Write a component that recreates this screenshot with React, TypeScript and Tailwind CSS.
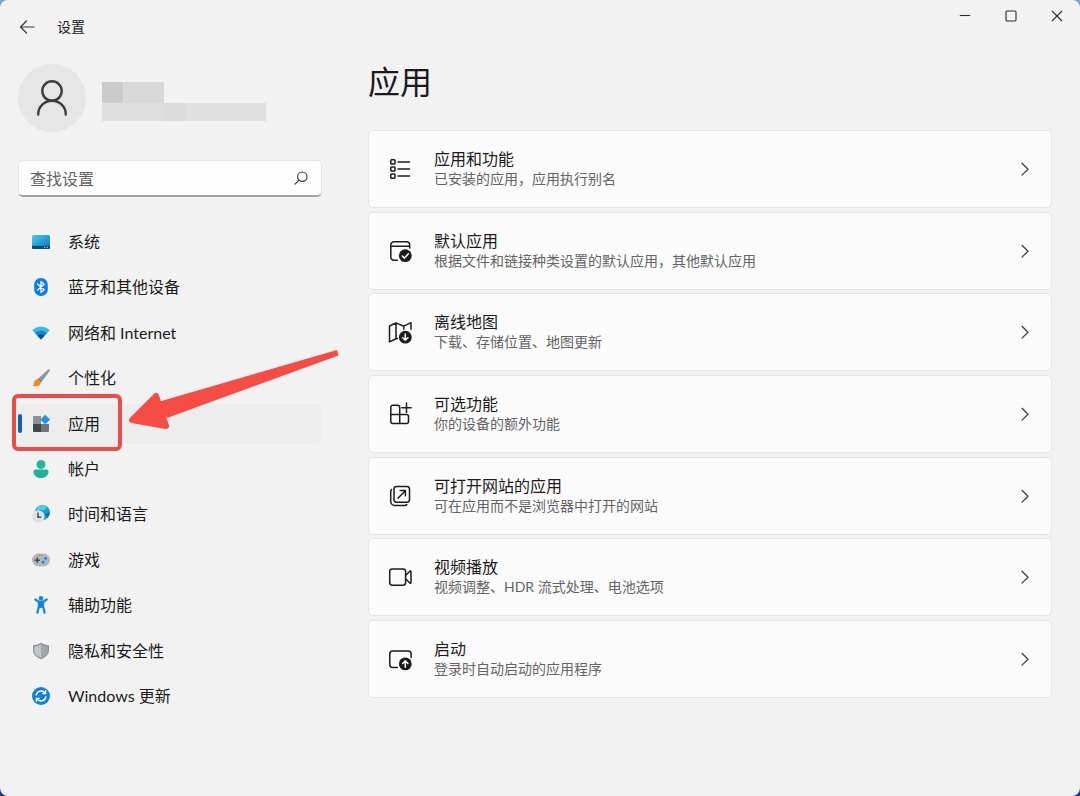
import React from "react";

type IconProps = { className?: string };

const navItems = [
    { id: "system", label: "系统", icon: SystemIcon },
    { id: "bluetooth", label: "蓝牙和其他设备", icon: BluetoothIcon },
    { id: "network", label: "网络和 Internet", icon: NetworkIcon },
    { id: "personalization", label: "个性化", icon: BrushIcon },
    { id: "apps", label: "应用", icon: AppsIcon },
    { id: "accounts", label: "帐户", icon: AccountIcon },
    { id: "time", label: "时间和语言", icon: TimeIcon },
    { id: "gaming", label: "游戏", icon: GamingIcon },
    { id: "accessibility", label: "辅助功能", icon: AccessibilityIcon },
    { id: "privacy", label: "隐私和安全性", icon: ShieldIcon },
    { id: "update", label: "Windows 更新", icon: UpdateIcon },
];

const cards = [
    { id: "features", title: "应用和功能", description: "已安装的应用，应用执行别名", icon: ListIcon },
    { id: "defaults", title: "默认应用", description: "根据文件和链接种类设置的默认应用，其他默认应用", icon: DefaultAppsIcon },
    { id: "maps", title: "离线地图", description: "下载、存储位置、地图更新", icon: MapIcon },
    { id: "optional", title: "可选功能", description: "你的设备的额外功能", icon: OptionalIcon },
    { id: "websites", title: "可打开网站的应用", description: "可在应用而不是浏览器中打开的网站", icon: OpenIcon },
    { id: "video", title: "视频播放", description: "视频调整、HDR 流式处理、电池选项", icon: VideoIcon },
    { id: "startup", title: "启动", description: "登录时自动启动的应用程序", icon: StartupIcon },
];

/* Sidebar icons, 18px */

function SystemIcon({ className }: IconProps) {
    return (
        <svg viewBox="0 0 18 18" className={className} aria-hidden="true">
            <defs>
                <linearGradient id="sys" x1="0" y1="0" x2="1" y2="1">
                    <stop offset="0" stopColor="#3fd0ee" />
                    <stop offset="1" stopColor="#1173b8" />
                </linearGradient>
            </defs>
            <rect y="2" width="18" height="14" rx="1.5" fill="url(#sys)" />
            <path d="M0 12.8h18v1.7a1.5 1.5 0 0 1-1.5 1.5h-15A1.5 1.5 0 0 1 0 14.5z" fill="#0c4a78" />
            <path d="M12 14.3h1.2M14.5 14.3H16" stroke="#b8e4f7" strokeWidth="0.9" />
        </svg>
    );
}

function BluetoothIcon({ className }: IconProps) {
    return (
        <svg viewBox="0 0 18 18" className={className} aria-hidden="true">
            <rect x="2.2" width="13.6" height="18" rx="6.5" fill="#0a7cf0" />
            <path d="M5.6 6l6.6 5.8L9 14.5v-11l3.2 2.7L5.6 12" fill="none" stroke="#fff" strokeWidth="1.3" strokeLinejoin="round" strokeLinecap="round" />
        </svg>
    );
}

function NetworkIcon({ className }: IconProps) {
    return (
        <svg viewBox="0 0 18 18" className={className} aria-hidden="true">
            <path d="M9 15.5L.3 6.2C5 1.7 13 1.7 17.7 6.2z" fill="#35b8ee" />
            <path d="M9 15.5L3 9.1c3.3-3.1 8.7-3.1 12 0z" fill="#1683d0" />
            <path d="M9 15.5l-3.4-3.6c1.9-1.8 4.9-1.8 6.8 0z" fill="#0d4f9c" />
        </svg>
    );
}

function BrushIcon({ className }: IconProps) {
    return (
        <svg viewBox="0 0 18 18" className={className} aria-hidden="true">
            <path d="M17.3.5c.6.5.4 1.3 0 1.9L10 12.3 6.600 9.2 15.500.9c.6-.5 1.3-.8 1.800-.4z" fill="#8d97a3" />
            <path d="M6.6 9.2l3.4 3.1-1.2 1.2-3.3-3.1z" fill="#5c6670" />
            <path d="M5.4 10.2c1.9.1 3.5 1.7 3.4 3.5-.2 3.3-4.8 4.5-8.6 3 2.3-.8 1.5-2.3 2.2-4.3.5-1.4 1.7-2.2 3-2.2z" fill="#f28a1c" />
        </svg>
    );
}

function AppsIcon({ className }: IconProps) {
    return (
        <svg viewBox="0 0 18 18" className={className} aria-hidden="true">
            <path d="M2 1h7v8H1V2a1 1 0 0 1 1-1z" fill="#8c9094" />
            <path d="M1 9h8v8H2a1 1 0 0 1-1-1z" fill="#43474b" />
            <path d="M9 9h8v7a1 1 0 0 1-1 1H9z" fill="#707478" />
            <rect x="9.8" y="1.2" width="6.8" height="6.8" rx="0.8" fill="#1b95e8" transform="rotate(45 13.2 4.6)" />
        </svg>
    );
}

function AccountIcon({ className }: IconProps) {
    return (
        <svg viewBox="0 0 18 18" className={className} aria-hidden="true">
            <circle cx="9" cy="4.5" r="4.5" fill="#25b79a" />
            <path d="M3.6 9.6h10.800c1.200 0 2.100.9 2.100 2.100 0 3.700-3.300 6.300-7.500 6.300s-7.500-2.600-7.500-6.300c0-1.200.9-2.100 2.100-2.100z" fill="#1fb095" />
        </svg>
    );
}

function TimeIcon({ className }: IconProps) {
    return (
        <svg viewBox="0 0 18 18" className={className} aria-hidden="true">
            <circle cx="10.5" cy="7.5" r="7.5" fill="#1a9fd4" />
            <path d="M8 .5c3-.6 5 0 7 1.7-1.6.6-1 2.6-3 3.1-2 .2-3-1.3-5-.3-1 .5-2 0-2.500-.5C5.200 2.500 6.500 1 8 .5z" fill="#4ccfe8" />
            <path d="M13 9l4.500-2c.3 2-.5 4.300-2.300 6z" fill="#0d6fb5" />
            <circle cx="6.3" cy="11.500" r="6.2" fill="#dfe2e5" />
            <path d="M6 7.500v4.700h3.200" fill="none" stroke="#4a4f54" strokeWidth="1.5" />
        </svg>
    );
}

function GamingIcon({ className }: IconProps) {
    return (
        <svg viewBox="0 0 18 18" className={className} aria-hidden="true">
            <rect y="2.500" width="18" height="13" rx="6.5" fill="#b3b7bc" />
            <path d="M5.300 6.500v5.400M2.600 9.200H8" stroke="#45494e" strokeWidth="1.4" />
            <circle cx="13.6" cy="7.4" r="1.4" fill="#1d7fd6" />
            <circle cx="11.2" cy="11.2" r="1.4" fill="#1d7fd6" />
            <path d="M6.500 4.500h1.200M9.200 4.500h1.200" stroke="#6d7277" strokeWidth="0.9" />
        </svg>
    );
}

function AccessibilityIcon({ className }: IconProps) {
    return (
        <svg viewBox="0 0 18 18" className={className} aria-hidden="true">
            <circle cx="9" cy="2.300" r="2.3" fill="#1487d8" />
            <path d="M3.300 3.500l3.200 2.200h5l3.200-2.200M6.700 6.500L7 10l-1.600 6.700M11.300 6.500L11 10l1.600 6.700" fill="none" stroke="#1487d8" strokeWidth="2.2" strokeLinecap="round" strokeLinejoin="round" />
            <path d="M6 5.500h6l-.6 6.500H6.600z" fill="#1487d8" />
        </svg>
    );
}

function ShieldIcon({ className }: IconProps) {
    return (
        <svg viewBox="0 0 18 18" className={className} aria-hidden="true">
            <path d="M9 .8c2.500 1.600 5 2.400 8 2.500v4.800c0 4.300-3.100 7.300-8 9.200C4.100 15.400 1 12.400 1 8.100V3.300c3-.1 5.500-.9 8-2.500z" fill="#8b8f94" />
            <path d="M9 2.200v13.700c-4.200-1.700-6.800-4.100-6.800-7.800V4.400C4.700 4.200 6.900 3.500 9 2.200z" fill="#c3c6c9" />
            <path d="M9 2.200c2.100 1.300 4.300 2 6.800 2.200v3.700c0 3.700-2.600 6.100-6.800 7.800z" fill="#a4a8ac" />
        </svg>
    );
}

function UpdateIcon({ className }: IconProps) {
    return (
        <svg viewBox="0 0 18 18" className={className} aria-hidden="true">
            <circle cx="9" cy="9" r="9" fill="#0f82d6" />
            <path d="M4.200 8a5 5 0 0 1 8.900-1.900M13.800 10a5 5 0 0 1-8.900 1.900" fill="none" stroke="#fff" strokeWidth="1.4" strokeLinecap="round" />
            <path d="M13.600 3.700v2.900h-2.900M4.400 14.300v-2.900h2.900" fill="none" stroke="#fff" strokeWidth="1.4" strokeLinecap="round" strokeLinejoin="round" />
        </svg>
    );
}

/* Card icons, 24px outline */

function Outline({ className, children }: IconProps & { children: React.ReactNode }) {
    return (
        <svg
            viewBox="0 0 24 24"
            className={className}
            fill="none"
            stroke="#1c1c1c"
            strokeWidth="1.5"
            strokeLinecap="round"
            strokeLinejoin="round"
            aria-hidden="true"
        >
            {children}
        </svg>
    );
}

function ListIcon({ className }: IconProps) {
    return (
        <Outline className={className}>
            <rect x="2.8" y="2.8" width="4.2" height="4.2" rx="0.8" />
            <rect x="2.8" y="9.9" width="4.2" height="4.2" rx="0.8" />
            <rect x="2.8" y="17" width="4.2" height="4.2" rx="0.8" />
            <path d="M10 4.900h11.500M10 12h11.500M10 19.100h11.500" />
        </Outline>
    );
}

function DefaultAppsIcon({ className }: IconProps) {
    return (
        <Outline className={className}>
            <path d="M9.300 21.300H6a3.200 3.200 0 0 1-3.200-3.200V6A3.200 3.200 0 0 1 6 2.800h12.500A3.200 3.200 0 0 1 21.700 6v3M2.800 7.300h18.900" />
            <circle cx="17.3" cy="16.7" r="6.4" fill="#1c1c1c" stroke="none" />
            <path d="M14.300 17l2.100 2.100 4-4.300" stroke="#fbfbfb" />
        </Outline>
    );
}

function MapIcon({ className }: IconProps) {
    return (
        <Outline className={className}>
            <path d="M9.500 18.500L8 18.800l-6.500 3.100V6L8 2.900l7.800 3.300L23 2.700v6.500M8 2.900v15.900M15.800 6.200v3" />
            <circle cx="17.3" cy="17.2" r="6.4" fill="#1c1c1c" stroke="none" />
            <path d="M17.300 14v6.200M14.700 17.700l2.600 2.600 2.600-2.600" stroke="#fbfbfb" />
        </Outline>
    );
}

function OptionalIcon({ className }: IconProps) {
    return (
        <Outline className={className}>
            <path d="M11.700 12.500V5.200a2 2 0 0 0-2-2H4.800a2 2 0 0 0-2 2v14.200a2 2 0 0 0 2 2h13.700a2 2 0 0 0 2-2v-4.900a2 2 0 0 0-2-2zM2.800 12.500h8.900M11.700 12.500v8.900" />
            <path d="M18.500 1v9.400M13.800 5.700h9.400" />
        </Outline>
    );
}

function OpenIcon({ className }: IconProps) {
    return (
        <Outline className={className}>
            <rect x="6" y="2.5" width="15.5" height="15.7" rx="2.6" />
            <path d="M3.600 5.500c-.6.600-.9 1.300-.9 2.200v9.500a4.300 4.300 0 0 0 4.300 4.300h9.500c.9 0 1.700-.3 2.300-.9" />
            <path d="M10 14.300l7.300-7.600M12.200 6.600h5.200v5.200" />
        </Outline>
    );
}

function VideoIcon({ className }: IconProps) {
    return (
        <Outline className={className}>
            <rect x="1.7" y="4" width="15.9" height="16.2" rx="2.6" />
            <path d="M17.800 10.200l4-4c.5-.5 1.200-.2 1.200.5v10.800c0 .7-.7 1-1.200.5l-4-4" />
        </Outline>
    );
}

function StartupIcon({ className }: IconProps) {
    return (
        <Outline className={className}>
            <path d="M9.500 20.500H4.800a3 3 0 0 1-3-3V7a3 3 0 0 1 3-3h15.300a3 3 0 0 1 3 3v3.500" />
            <circle cx="17.3" cy="16.9" r="6.4" fill="#1c1c1c" stroke="none" />
            <path d="M17.300 20.200V14M14.700 16.500l2.600-2.600 2.600 2.600" stroke="#fbfbfb" />
        </Outline>
    );
}

/* Red box and arrow pointing at the active entry */
function Callout() {
    return (
        <>
            <span className="pointer-events-none absolute -left-1.5 -top-2.5 z-10 h-[57px] w-[110px] rounded-md border-4 border-[#ea4c48]" />
            <svg
                viewBox="0 0 212 84"
                className="pointer-events-none absolute -top-14 left-[110px] z-10 h-[84px] w-[212px]"
                aria-hidden="true"
            >
                <path d="M209 2l1.500 5.500L39 70l-9-16z" fill="#f64c45" />
                <path d="M4 72l24-24 10 30z" fill="#f64c45" stroke="#f64c45" strokeWidth="6" strokeLinejoin="round" />
            </svg>
        </>
    );
}

const TitleBar = () => (
    <header className="flex h-16 items-start justify-between">
        <div className="flex h-[54px] items-center gap-[21px] pl-[18px]">
            <button type="button" aria-label="返回" className="flex h-[18px] w-[18px] items-center justify-center">
                <svg viewBox="0 0 18 18" className="h-[18px] w-[18px]" fill="none" stroke="#3a3a3a" strokeWidth="1.2" aria-hidden="true">
                    <path d="M16 9H2.500M8.500 3l-6 6 6 6" strokeLinecap="round" strokeLinejoin="round" />
                </svg>
            </button>
            <span className="text-sm">设置</span>
        </div>
        <div className="flex">
            <button type="button" aria-label="最小化" className="flex h-8 w-[46px] items-center justify-center">
                <svg viewBox="0 0 12 12" className="h-3 w-3" fill="none" stroke="#2a2a2a" strokeWidth="1.1" aria-hidden="true">
                    <path d="M.8 5.500h10.400" />
                </svg>
            </button>
            <button type="button" aria-label="最大化" className="flex h-8 w-[46px] items-center justify-center">
                <svg viewBox="0 0 12 12" className="h-3 w-3" fill="none" stroke="#2a2a2a" strokeWidth="1.1" aria-hidden="true">
                    <rect x="1" y="1" width="10" height="10" rx="1.2" />
                </svg>
            </button>
            <button type="button" aria-label="关闭" className="flex h-8 w-[46px] items-center justify-center">
                <svg viewBox="0 0 12 12" className="h-3 w-3" fill="none" stroke="#2a2a2a" strokeWidth="1.1" aria-hidden="true">
                    <path d="M1 1l10 10M11 1L1 11" />
                </svg>
            </button>
        </div>
    </header>
);

const Sidebar = () => (
    <aside className="w-[304px] shrink-0">
        <div className="flex h-[68px] items-center gap-4">
            <div className="flex h-[68px] w-[68px] items-center justify-center rounded-full bg-[#e6e6e6]">
                <svg viewBox="0 0 36 36" className="h-9 w-9" fill="none" stroke="#3d3d3d" strokeWidth="2.4" strokeLinecap="round" aria-hidden="true">
                    <circle cx="18" cy="11" r="9.7" />
                    <path d="M4.200 34.500C4.200 26.500 10.400 20.700 18 20.700s13.800 5.800 13.800 13.800" />
                </svg>
            </div>
            {/* Pixelated account name */}
            <div className="mt-1.5" aria-hidden="true">
                <div className="flex h-[21px]">
                    <span className="w-[21px] bg-[#cbcbcb]" />
                    <span className="w-[41px] bg-[#d9d9d9]" />
                </div>
                <div className="flex h-[18px]">
                    <span className="w-[62px] bg-[#dfdfdf]" />
                    <span className="w-[21px] bg-[#dbdbdb]" />
                    <span className="w-[81px] bg-[#e0e0e0]" />
                </div>
            </div>
        </div>

        <div className="mt-7 flex h-[37px] items-center rounded-[5px] border border-b-2 border-[#e5e5e5] border-b-[#a3a3a3] bg-[#fdfdfd] pl-[11px] pr-3">
            <input
                type="text"
                aria-label="查找设置"
                placeholder="查找设置"
                className="h-full min-w-0 flex-1 bg-transparent text-base outline-none placeholder:text-[#636363]"
            />
            <svg viewBox="0 0 16 16" className="h-4 w-4" fill="none" stroke="#3d3d3d" strokeWidth="1.2" strokeLinecap="round" aria-hidden="true">
                <circle cx="9.3" cy="6.7" r="4.7" />
                <path d="M6 10.200l-4 4" />
            </svg>
        </div>

        <nav className="mt-[25px]">
            <ul className="flex h-[494px] flex-col justify-between">
                {navItems.map((item) => {
                    const active = item.id === "apps";
                    return (
                        <li key={item.id} className="relative">
                            <a
                                href={`#${item.id}`}
                                aria-current={active ? "page" : undefined}
                                className={`flex h-10 items-center gap-[18px] rounded-[5px] pl-[14px] text-base ${active ? "bg-[#ededed]" : ""}`}
                            >
                                {active && <span className="absolute left-0 h-[19px] w-[4px] rounded-full bg-[#1160b8]" />}
                                <item.icon className="h-[18px] w-[18px] shrink-0" />
                                {item.label}
                            </a>
                            {active && <Callout />}
                        </li>
                    );
                })}
            </ul>
        </nav>
    </aside>
);

const App = () => {
    return (
        <div className="min-h-screen bg-gradient-to-b from-[#86a3c4] to-[#1b3a93]">
            <div
                lang="zh-CN"
                className="min-h-screen rounded-lg bg-[#f2f2f2] font-['Lato','Noto_Sans_CJK_SC',sans-serif] text-[#1b1b1b]"
            >
                <TitleBar />
                <div className="flex gap-[46px] pb-6 pl-[18px] pr-7">
                    <Sidebar />
                    <main className="min-w-0 flex-1">
                        <h1 className="text-[32px] leading-9">应用</h1>
                        <div className="mt-[30px] flex h-[568px] flex-col justify-between">
                            {cards.map((card) => (
                                <a
                                    key={card.id}
                                    href={`#${card.id}`}
                                    className="flex h-[78px] items-center gap-[22px] rounded-[5px] border border-[#e5e5e5] bg-[#fbfbfb] pl-[19px] pr-[18px]"
                                >
                                    <card.icon className="h-6 w-6 shrink-0" />
                                    <div className="min-w-0 flex-1">
                                        <h2 className="text-base leading-5">{card.title}</h2>
                                        <p className="text-sm leading-5 text-[#646464]">{card.description}</p>
                                    </div>
                                    <svg viewBox="0 0 16 16" className="h-4 w-4 shrink-0" fill="none" stroke="#3a3a3a" strokeWidth="1.2" aria-hidden="true">
                                        <path d="M5 2.300l6 5.900-6 5.900" strokeLinecap="round" strokeLinejoin="round" />
                                    </svg>
                                </a>
                            ))}
                        </div>
                    </main>
                </div>
            </div>
        </div>
    );
};

export default App;
